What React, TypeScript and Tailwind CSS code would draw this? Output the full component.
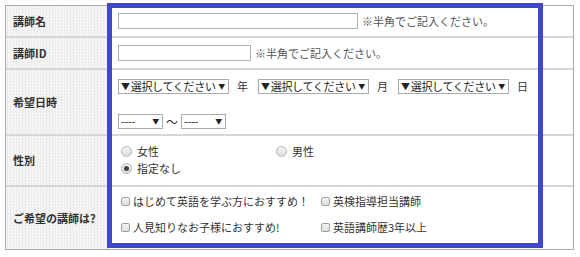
import React from 'react';

const font = { fontFamily: '"Noto Sans CJK JP", "Liberation Sans", sans-serif' };

function Select({ label, width, mark }: { label: string; width: string; mark?: boolean }) {
    return (
        <div className={`flex h-[15px] ${width} items-center justify-between overflow-hidden whitespace-nowrap border border-[#a9a9a9] bg-white pl-[2px] pr-[3px] text-[11px] leading-none tracking-[-0.3px] text-[#222]`}>
            <span className="flex items-center">
                {mark && <span className="mr-[1px] text-[9px]">▼</span>}
                {label}
            </span>
            <span className="text-[7px]">▼</span>
        </div>
    );
}

function Radio({ checked, label }: { checked?: boolean; label: string }) {
    return (
        <div className="flex items-center gap-[5px]">
            <span className="flex h-[11px] w-[11px] items-center justify-center rounded-full border border-[#b4b4b4] bg-gradient-to-b from-[#f4f4f4] to-[#dcdcdc]">
                {checked && <span className="h-[5px] w-[5px] rounded-full bg-[#444]" />}
            </span>
            <span>{label}</span>
        </div>
    );
}

function Check({ label }: { label: string }) {
    return (
        <div className="flex items-center gap-[3px]">
            <span className="h-[9px] w-[9px] rounded-[2px] border border-[#a0a0a0] bg-gradient-to-b from-[#f4f4f4] to-[#dedede]" />
            <span>{label}</span>
        </div>
    );
}

function Label({ children }: { children: React.ReactNode }) {
    return (
        <div className="flex w-[102px] shrink-0 items-center border-r border-[#cccccc] bg-[#f3f3f3] bg-[repeating-conic-gradient(#ececec_0_25%,#f8f8f8_0_50%)] bg-[length:3px_3px] pl-[7px] text-[11px] font-bold text-[#333]">
            {children}
        </div>
    );
}

export default function App() {
    return (
        <div className="relative h-[257px] w-[580px] bg-white text-[11px] text-[#333]" style={font}>
            <div className="ml-[5px] w-[569px] translate-y-[5px] border border-[#aaaaaa]">
                <div className="flex h-[30px]">
                    <Label>講師名</Label>
                    <div className="flex flex-1 items-center gap-[4px] pl-[10px]">
                        <div className="h-[16px] w-[240px] border border-[#b0b0b0] bg-white" />
                        <span className="text-[#555]">※半角でご記入ください。</span>
                    </div>
                </div>
                <div className="flex h-[32px] border-t-2 border-[#d6d6d6]">
                    <Label>講師ID</Label>
                    <div className="flex flex-1 items-center gap-[4px] pl-[10px]">
                        <div className="h-[16px] w-[133px] border border-[#b0b0b0] bg-white" />
                        <span className="text-[#555]">※半角でご記入ください。</span>
                    </div>
                </div>
                <div className="flex h-[66px] border-t-2 border-[#d6d6d6]">
                    <Label>希望日時</Label>
                    <div className="flex flex-1 flex-col gap-[18px] pl-[10px] pt-[8px]">
                        <div className="flex items-center">
                            <Select mark label="選択してください" width="w-[111px]" />
                            <span className="ml-[8px] mr-[10px]">年</span>
                            <Select mark label="選択してください" width="w-[111px]" />
                            <span className="ml-[8px] mr-[10px]">月</span>
                            <Select mark label="選択してください" width="w-[111px]" />
                            <span className="ml-[8px]">日</span>
                        </div>
                        <div className="flex items-center">
                            <Select label="----" width="w-[45px]" />
                            <span className="mx-[3px] text-[12px]">〜</span>
                            <Select label="----" width="w-[45px]" />
                        </div>
                    </div>
                </div>
                <div className="flex h-[51px] border-t-2 border-[#d6d6d6]">
                    <Label>性別</Label>
                    <div className="grid flex-1 grid-cols-[155px_1fr] content-start gap-y-[1px] pl-[13px] pt-[7px] leading-[16px]">
                        <Radio label="女性" />
                        <Radio label="男性" />
                        <Radio checked label="指定なし" />
                    </div>
                </div>
                <div className="flex h-[64px] border-t-2 border-[#d6d6d6]">
                    <Label>ご希望の講師は?</Label>
                    <div className="grid flex-1 grid-cols-[200px_1fr] content-start gap-y-[10px] pl-[13px] pt-[6px] leading-[16px]">
                        <Check label="はじめて英語を学ぶ方におすすめ！" />
                        <Check label="英検指導担当講師" />
                        <Check label="人見知りなお子様におすすめ!" />
                        <Check label="英語講師歴3年以上" />
                    </div>
                </div>
            </div>
            <div className="absolute left-[107px] top-[3px] h-[245px] w-[436px] border-[5px] border-[#3f48cc]" />
        </div>
    );
}
